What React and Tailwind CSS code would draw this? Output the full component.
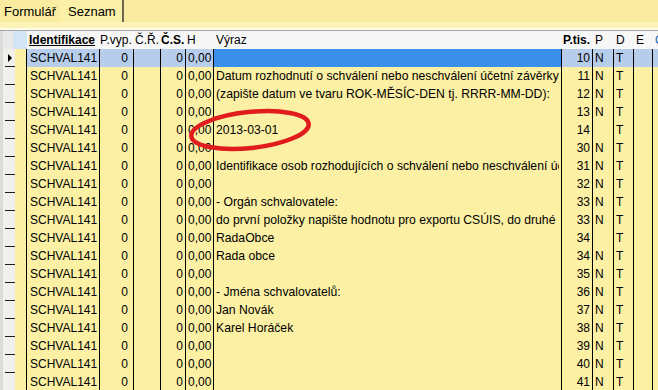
const ROWS = [
  { text: '', ptis: '10', p: 'N' },
  { text: 'Datum rozhodnutí o schválení nebo neschválení účetní závěrky', ptis: '11', p: 'N' },
  { text: '(zapište datum ve tvaru ROK-MĚSÍC-DEN tj. RRRR-MM-DD):', ptis: '12', p: 'N' },
  { text: '', ptis: '13', p: 'N' },
  { text: '2013-03-01', ptis: '14', p: '' },
  { text: '', ptis: '30', p: 'N' },
  { text: 'Identifikace osob rozhodujících o schválení nebo neschválení účetní závěrky', ptis: '31', p: 'N' },
  { text: '', ptis: '32', p: 'N' },
  { text: '- Orgán schvalovatele:', ptis: '33', p: 'N' },
  { text: 'do první položky napište hodnotu pro exportu CSÚIS, do druhé položky', ptis: '33', p: 'N' },
  { text: 'RadaObce', ptis: '34', p: '' },
  { text: 'Rada obce', ptis: '34', p: 'N' },
  { text: '', ptis: '35', p: 'N' },
  { text: '- Jména schvalovatelů:', ptis: '36', p: 'N' },
  { text: 'Jan Novák', ptis: '37', p: 'N' },
  { text: 'Karel Horáček', ptis: '38', p: 'N' },
  { text: '', ptis: '39', p: 'N' },
  { text: '', ptis: '40', p: 'N' },
  { text: '', ptis: '41', p: 'N' },
]

function HeaderRow() {
  return (
    <div className="flex h-[19px] shrink-0 border-t border-[#a7a7a7] bg-[#f7f7f7] leading-[18px] whitespace-nowrap text-black">
      <div className="w-[3px] shrink-0 bg-[#dcdcdc]" />
      <div className="w-[10px] shrink-0 bg-[#e9e9e9]" />
      <div className="w-[14px] shrink-0 bg-[#d3e4f6]" />
      <div className="w-[73px] shrink-0 pl-[2px] font-bold underline">Identifikace</div>
      <div className="w-[34px] shrink-0">P.vyp.</div>
      <div className="w-[27px] shrink-0 pl-[1px]">Č.Ř.</div>
      <div className="w-[25px] shrink-0 font-bold">Č.S.</div>
      <div className="w-[28px] shrink-0 pl-[1px]">H</div>
      <div className="w-[348px] shrink-0 pl-[2px]">Výraz</div>
      <div className="w-[31px] shrink-0 pl-[1px] font-bold">P.tis.</div>
      <div className="w-[21px] shrink-0 pl-[2px]">P</div>
      <div className="w-[20px] shrink-0 pl-[2px]">D</div>
      <div className="w-[19px] shrink-0 pl-[2px]">E</div>
      <div className="w-[40px] shrink-0 pl-[2px] text-[#2a5db0]">O</div>
    </div>
  )
}

function DataRow({ row, selected }) {
  const sel = selected ? 'bg-[#b6cdec]' : ''
  const focus = selected ? 'bg-[#3a8fea]' : ''
  return (
    <div className="flex h-[18px] shrink-0 leading-[18px] whitespace-nowrap text-black">
      <div className="w-[3px] shrink-0 bg-[#dcdcdc]" />
      <div className="relative w-[12px] shrink-0 bg-[#f1f0ec]">
        <div className="absolute bottom-0 left-[2px] right-0 border-b border-[#1e1e1e]" />
        {selected && (
          <svg className="absolute left-0 top-0" width="12" height="18" viewBox="0 0 12 18">
            <polygon points="5,5 9,9 5,13" fill="#000" />
          </svg>
        )}
      </div>
      <div className="w-[12px] shrink-0 border-r border-black" />
      <div className={`w-[73px] shrink-0 border-r border-black pl-[3px] ${sel}`}>SCHVAL141</div>
      <div className={`w-[34px] shrink-0 border-r border-black pr-[5px] text-right ${sel}`}>0</div>
      <div className={`w-[27px] shrink-0 border-r border-black ${sel}`} />
      <div className={`w-[25px] shrink-0 border-r border-black pr-[2px] text-right ${sel}`}>0</div>
      <div className={`w-[28px] shrink-0 border-r border-black pl-[2px] ${sel}`}>0,00</div>
      <div className={`w-[348px] min-w-0 shrink-0 overflow-hidden border-r border-black ${focus}`}>
        <div className="w-[345px] overflow-clip pl-[2px] text-[12.2px]">{row.text}</div>
      </div>
      <div className={`w-[31px] shrink-0 border-r border-black pr-[2px] text-right ${sel}`}>{row.ptis}</div>
      <div className={`w-[21px] shrink-0 border-r border-black pl-[2px] ${sel}`}>{row.p}</div>
      <div className={`w-[20px] shrink-0 border-r border-black pl-[2px] ${sel}`}>T</div>
      <div className={`w-[19px] shrink-0 border-r border-black ${sel}`} />
      <div className={`w-[40px] shrink-0 ${sel}`} />
    </div>
  )
}

export default function App() {
  return (
    <div className="relative flex h-[390px] w-[658px] flex-col overflow-hidden bg-[#fcf0a4] font-['Liberation_Sans',Arial,sans-serif] text-[12px]">
      {/* tabs */}
      <div className="flex h-[22px] shrink-0 items-stretch bg-[#f9eca0] text-[13px] text-black">
        <div className="flex w-[60px] items-center pl-[4px] pt-[1px]">Formulář</div>
        <div className="flex w-[64px] items-center border-r-2 border-r-[#6e6650] bg-[#fbf0a8] pl-[8px] pt-[1px]">Seznam</div>
      </div>
      <div className="h-[6px] shrink-0 bg-[#fcf3b6]" />
      <div className="h-[2px] shrink-0 bg-[#fffbea]" />

      <HeaderRow />
      {ROWS.map((row, i) => (
        <DataRow key={i} row={row} selected={i === 0} />
      ))}

      {/* red annotation ellipse */}
      <svg className="pointer-events-none absolute left-0 top-0" width="658" height="390" viewBox="0 0 658 390">
        <ellipse cx="250" cy="130" rx="59" ry="18" transform="rotate(-6 250 130)" fill="none" stroke="#e11c1c" strokeWidth="4.5" />
      </svg>
    </div>
  )
}
